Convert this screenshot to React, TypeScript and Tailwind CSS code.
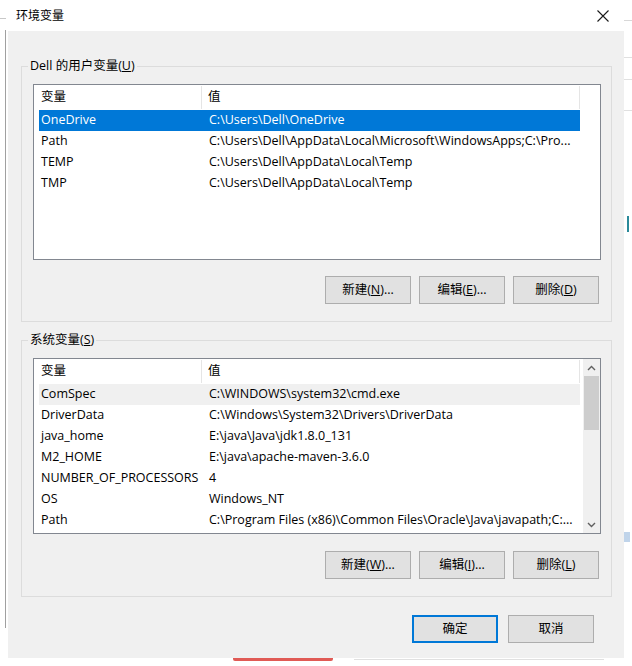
import React from "react";

const FONT = "font-['Open_Sans','Noto_Sans_CJK_SC',sans-serif]";

type Row = { name: string; value: string; state?: "sel" | "hover" };

const userVars: Row[] = [
  { name: "OneDrive", value: "C:\\Users\\Dell\\OneDrive", state: "sel" },
  { name: "Path", value: "C:\\Users\\Dell\\AppData\\Local\\Microsoft\\WindowsApps;C:\\Pro..." },
  { name: "TEMP", value: "C:\\Users\\Dell\\AppData\\Local\\Temp" },
  { name: "TMP", value: "C:\\Users\\Dell\\AppData\\Local\\Temp" },
];

const sysVars: Row[] = [
  { name: "ComSpec", value: "C:\\WINDOWS\\system32\\cmd.exe", state: "hover" },
  { name: "DriverData", value: "C:\\Windows\\System32\\Drivers\\DriverData" },
  { name: "java_home", value: "E:\\java\\Java\\jdk1.8.0_131" },
  { name: "M2_HOME", value: "E:\\java\\apache-maven-3.6.0" },
  { name: "NUMBER_OF_PROCESSORS", value: "4" },
  { name: "OS", value: "Windows_NT" },
  { name: "Path", value: "C:\\Program Files (x86)\\Common Files\\Oracle\\Java\\javapath;C:..." },
];

function Header() {
  return (
    <div className="flex h-[25px] items-center bg-white text-[12.5px] text-black">
      <div className="flex h-[23px] w-[168px] items-center border-r border-[#e5e5e5] pl-[7px]">变量</div>
      <div className="flex h-[23px] w-[378px] items-center border-r border-[#e5e5e5] pl-[6px]">值</div>
    </div>
  );
}

function ListRow({ r }: { r: Row }) {
  const bg =
    r.state === "sel" ? "bg-[#0078d7] text-white" : r.state === "hover" ? "bg-[#f0f0f0] text-black" : "text-black";
  return (
    <div className="pl-[5px]">
      <div className={`flex h-[21px] w-[541px] items-center whitespace-nowrap text-[12.5px] ${bg}`}>
        <div className="w-[168px] overflow-hidden pl-[2px]">{r.name}</div>
        <div className="flex-1 overflow-hidden pl-[2px]">{r.value}</div>
      </div>
    </div>
  );
}

function Btn({ label, m, rest, primary }: { label: string; m?: string; rest?: string; primary?: boolean }) {
  return (
    <div
      className={`flex h-[28px] w-[86px] items-center justify-center bg-[#e1e1e1] text-[12.5px] text-black ${
        primary ? "border-2 border-[#0078d7]" : "border border-[#adadad]"
      }`}
    >
      <span>
        {label}
        {m !== undefined && (
          <>
            (<u>{m}</u>){rest}
          </>
        )}
      </span>
    </div>
  );
}

function Chevron({ up }: { up?: boolean }) {
  return (
    <svg width="9" height="6" viewBox="0 0 9 6">
      <path
        d={up ? "M1 5 L4.5 1.5 L8 5" : "M1 1 L4.5 4.5 L8 1"}
        fill="none"
        stroke="#606060"
        strokeWidth="1.4"
      />
    </svg>
  );
}

function Group({
  title,
  m,
  rows,
  scroll,
  buttons,
  mt,
  bmt,
}: {
  title: string;
  m: string;
  rows: Row[];
  scroll?: boolean;
  buttons: [string, string, string][];
  mt: string;
  bmt: string;
}) {
  return (
    <fieldset className={`ml-[13px] w-[591px] border border-[#dcdcdc] p-0 ${mt}`}>
      <legend className="ml-[6px] px-[2px] text-[12.5px] leading-[16px] text-black">
        {title}(<u>{m}</u>)
      </legend>
      <div className="pb-[17px] pl-[11px] pr-[10px] pt-[10px]">
        <div className="flex h-[176px] border border-[#828790] bg-white">
          <div className="flex-1 overflow-hidden">
            <Header />
            {rows.map((r, i) => (
              <ListRow key={i} r={r} />
            ))}
          </div>
          {scroll && (
            <div className="flex w-[17px] flex-col bg-[#f0f0f0]">
              <div className="flex h-[17px] items-center justify-center">
                <Chevron up />
              </div>
              <div className="mx-[1px] h-[54px] bg-[#cdcdcd]" />
              <div className="flex-1" />
              <div className="flex h-[17px] items-center justify-center">
                <Chevron />
              </div>
            </div>
          )}
        </div>
        <div className={`flex justify-end gap-[8px] pr-[2px] ${bmt}`}>
          {buttons.map(([a, b, c], i) => (
            <Btn key={i} label={a} m={b} rest={c} />
          ))}
        </div>
      </div>
    </fieldset>
  );
}

export default function App() {
  return (
    <div className={`flex h-[666px] w-[632px] flex-col overflow-hidden bg-white ${FONT}`}>
      <div className="flex h-[658px]">
        {/* left background strip */}
        <div className="flex w-[8px] flex-col bg-white">
          <div className="mt-[18px] h-[1px] w-[6px] bg-[#c8c8c8]" />
          <div className="ml-[5px] mt-[11px] h-[598px] w-[1px] bg-[#a0a0a0]" />
        </div>
        {/* dialog */}
        <div className="flex w-[616px] flex-col bg-[#f0f0f0]">
          <div className="flex h-[31px] items-center justify-between bg-white pl-[8px] pr-[15px]">
            <span className="text-[12px] text-black">环境变量</span>
            <svg width="12" height="12" viewBox="0 0 12 12">
              <path d="M0.5 0.5 L11.5 11.5 M11.5 0.5 L0.5 11.5" stroke="#1a1a1a" strokeWidth="1.1" />
            </svg>
          </div>
          <Group
            title="Dell 的用户变量"
            m="U"
            rows={userVars}
            mt="mt-[27px]"
            bmt="mt-[16px]"
            buttons={[
              ["新建", "N", "..."],
              ["编辑", "E", "..."],
              ["删除", "D", ""],
            ]}
          />
          <Group
            title="系统变量"
            m="S"
            rows={sysVars}
            scroll
            mt="mt-[10px]"
            bmt="mt-[17px]"
            buttons={[
              ["新建", "W", "..."],
              ["编辑", "I", "..."],
              ["删除", "L", ""],
            ]}
          />
          <div className="mt-[18px] flex justify-end gap-[10px] pr-[30px]">
            <Btn label="确定" primary />
            <Btn label="取消" />
          </div>
        </div>
        {/* right background strip */}
        <div className="flex w-[8px] flex-col bg-white">
          <div className="mt-[20px] h-[1px] bg-[#d8d8d8]" />
          <div className="mt-[36px] h-[1px] bg-[#e0e0e0]" />
          <div className="mt-[21px] h-[1px] bg-[#e0e0e0]" />
          <div className="mt-[30px] h-[1px] bg-[#e0e0e0]" />
          <div className="ml-[3px] mt-[105px] h-[16px] w-[2px] bg-[#2a8a9a]" />
          <div className="mt-[300px] h-[10px] w-[6px] bg-[#c0d4ea]" />
        </div>
      </div>
      {/* bottom background strip */}
      <div className="flex h-[8px] items-start">
        <div className="ml-[233px] h-[3px] w-[100px] rounded-b-[2px] bg-[#e05a55]" />
        <div className="ml-[21px] mt-[1px] h-[1px] w-[250px] bg-[#e0e0e0]" />
      </div>
    </div>
  );
}
